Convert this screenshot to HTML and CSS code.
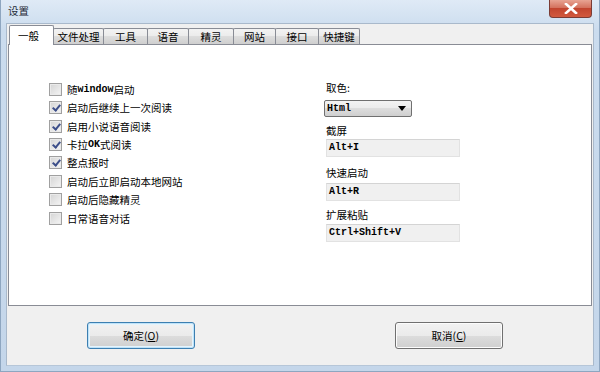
FILE: index.html
```html
<!DOCTYPE html>
<html>
<head>
<meta charset="utf-8">
<link rel="stylesheet" href="styles.css">
</head>
<body>
<div class="window">
  <div class="titlebar">
    <span class="title">设置</span>
    <span class="close"><svg width="14" height="11" viewBox="0 0 14 11"><path d="M2 1 L12 10 M12 1 L2 10" stroke="#fff" stroke-width="2.6" stroke-linecap="square"/></svg></span>
  </div>
  <div class="client">
    <div class="tabs">
      <div class="tab active">一般</div>
      <div class="tab">文件处理</div>
      <div class="tab">工具</div>
      <div class="tab">语音</div>
      <div class="tab">精灵</div>
      <div class="tab">网站</div>
      <div class="tab">接口</div>
      <div class="tab">快捷键</div>
    </div>
    <div class="panel">
      <div class="checks">
        <div class="row"><span class="cb"></span>随<span class="mono">window</span>启动</div>
        <div class="row"><span class="cb on"></span>启动后继续上一次阅读</div>
        <div class="row"><span class="cb on"></span>启用小说语音阅读</div>
        <div class="row"><span class="cb on"></span>卡拉<span class="mono">OK</span>式阅读</div>
        <div class="row"><span class="cb on"></span>整点报时</div>
        <div class="row"><span class="cb"></span>启动后立即启动本地网站</div>
        <div class="row"><span class="cb"></span>启动后隐藏精灵</div>
        <div class="row"><span class="cb"></span>日常语音对话</div>
      </div>
      <div class="fields">
        <div class="lbl l1">取色:</div>
        <div class="select"><span class="mono">Html</span><svg width="8" height="5" viewBox="0 0 8 5"><path d="M0 0 H8 L4 5 Z" fill="#000"/></svg></div>
        <div class="lbl l2">截屏</div>
        <div class="field f1">Alt+I</div>
        <div class="lbl l3">快速启动</div>
        <div class="field f2">Alt+R</div>
        <div class="lbl l4">扩展粘贴</div>
        <div class="field f3">Ctrl+Shift+V</div>
      </div>
    </div>
    <div class="footer">
      <button class="btn ok">确定(<u>O</u>)</button>
      <button class="btn">取消(<u>C</u>)</button>
    </div>
  </div>
</div>
</body>
</html>
```

FILE: styles.css
```css
html, body {
  margin: 0;
  padding: 0;
}
body {
  width: 600px;
  height: 372px;
  overflow: hidden;
  font-family: "Noto Sans CJK SC", "Noto Sans", sans-serif;
  font-size: 10.5px;
  color: #000;
}
.window {
  width: 600px;
  height: 372px;
  box-sizing: border-box;
  background: linear-gradient(#dfeaf6, #cbdcee 30px, #c4d6ea);
  border: 1px solid #8ea6c0;
  border-top: none;
  display: flex;
  flex-direction: column;
}
.titlebar {
  height: 23px;
  display: flex;
  justify-content: space-between;
  align-items: flex-start;
  padding-left: 7px;
  padding-right: 7px;
}
.title {
  margin-top: 4px;
  font-size: 10.5px;
  line-height: 14px;
  color: #1e2a38;
}
.close {
  width: 43px;
  height: 18px;
  box-sizing: border-box;
  border: 1px solid #7b3c35;
  border-top: none;
  border-radius: 0 0 4px 4px;
  background: linear-gradient(#e8a493, #d4725e 45%, #c2452f 50%, #d25a3e);
  display: flex;
  align-items: center;
  justify-content: center;
}
.client {
  flex: 1;
  margin: 0 5px 5px 5px;
  background: #f0f0f0;
  border: 1px solid #a9b9cb;
  border-bottom-color: #b6c6d8;
  padding: 0 1px;
  display: flex;
  flex-direction: column;
}
.tabs {
  height: 20px;
  display: flex;
  align-items: flex-end;
  padding-left: 1px;
  position: relative;
  z-index: 2;
}
.tab {
  height: 16px;
  box-sizing: border-box;
  border: 1px solid #898c95;
  border-bottom: none;
  margin-left: -1px;
  background: linear-gradient(#f3f3f3, #ebebeb 50%, #dddddd 50%, #cfcfcf);
  line-height: 15px;
  text-align: center;
  border-radius: 2px 2px 0 0;
}
.tab:nth-child(1) { width: 45px; }
.tab:nth-child(2) { width: 51px; }
.tab:nth-child(3) { width: 45px; }
.tab:nth-child(4) { width: 42px; }
.tab:nth-child(5) { width: 46px; }
.tab:nth-child(6) { width: 43px; }
.tab:nth-child(7) { width: 44px; }
.tab:nth-child(8) { width: 42px; }
.tab.active {
  margin-left: 0;
  height: 20px;
  margin-bottom: -1px;
  background: #fff;
  line-height: 19px;
  text-align: left;
  padding-left: 8px;
  position: relative;
  z-index: 3;
}
.panel {
  height: 262px;
  box-sizing: border-box;
  background: #fff;
  border: 1px solid #898c95;
  display: flex;
  padding: 35px 0 0 40px;
}
.checks {
  width: 275px;
  display: flex;
  flex-direction: column;
}
.row {
  height: 18.45px;
  display: flex;
  align-items: center;
}
.cb {
  width: 13px;
  height: 13px;
  box-sizing: border-box;
  border: 1px solid #a0a0a0;
  background: linear-gradient(135deg, #d4d4d4, #f5f5f5);
  box-shadow: inset 0 0 0 1px #eaeaea;
  margin-right: 5px;
  position: relative;
}
.cb.on::after {
  content: "";
  position: absolute;
  left: 4px;
  top: 1px;
  width: 3px;
  height: 6px;
  border: solid #3d4f8a;
  border-width: 0 2px 2px 0;
  transform: rotate(40deg);
}
.mono {
  font-family: "Liberation Mono", monospace;
  font-weight: bold;
  font-size: 10px;
}
.fields {
  display: flex;
  flex-direction: column;
  padding-left: 2px;
}
.lbl {
  height: 14px;
  line-height: 14px;
}
.l1 { margin-top: 1px; }
.select {
  margin-top: 5px;
  margin-left: -2px;
  width: 88px;
  height: 17px;
  box-sizing: border-box;
  border: 1px solid #707070;
  border-radius: 2px;
  background: linear-gradient(#f3f3f3, #ebebeb 50%, #dddddd 50%, #cfcfcf);
  display: flex;
  align-items: center;
  justify-content: space-between;
  padding: 0 5px 0 2px;
}
.l2 { margin-top: 7px; }
.l3 { margin-top: 9px; }
.l4 { margin-top: 7px; }
.field {
  width: 134px;
  height: 18px;
  box-sizing: border-box;
  background: #f0f0f0;
  border: 1px solid #e2e2e2;
  border-top-color: #d4d4d4;
  font-family: "Liberation Mono", monospace;
  font-weight: bold;
  font-size: 10px;
  line-height: 16px;
  padding-left: 2px;
}
.f1 { margin-top: 1px; }
.f2 { margin-top: 3px; }
.f3 { margin-top: 2px; }
.footer {
  flex: 1;
  display: flex;
  align-items: flex-start;
  padding: 16px 0 0 79px;
  gap: 200px;
}
.btn {
  width: 108px;
  height: 27px;
  box-sizing: border-box;
  border: 1px solid #707070;
  border-radius: 3px;
  background: linear-gradient(#f2f2f2, #ebebeb 50%, #dddddd 50%, #cfcfcf);
  font-family: "Noto Sans CJK SC", "Noto Sans", sans-serif;
  font-size: 10.5px;
  color: #000;
  padding: 0;
  box-shadow: inset 0 0 0 1px #fcfcfc;
}
.btn u {
  text-underline-offset: 1px;
}
.btn.ok {
  border-color: #3c7fb1;
  box-shadow: inset 0 0 0 1px #bfe2f8, inset 0 0 0 2px #e5f4fc;
}
```
